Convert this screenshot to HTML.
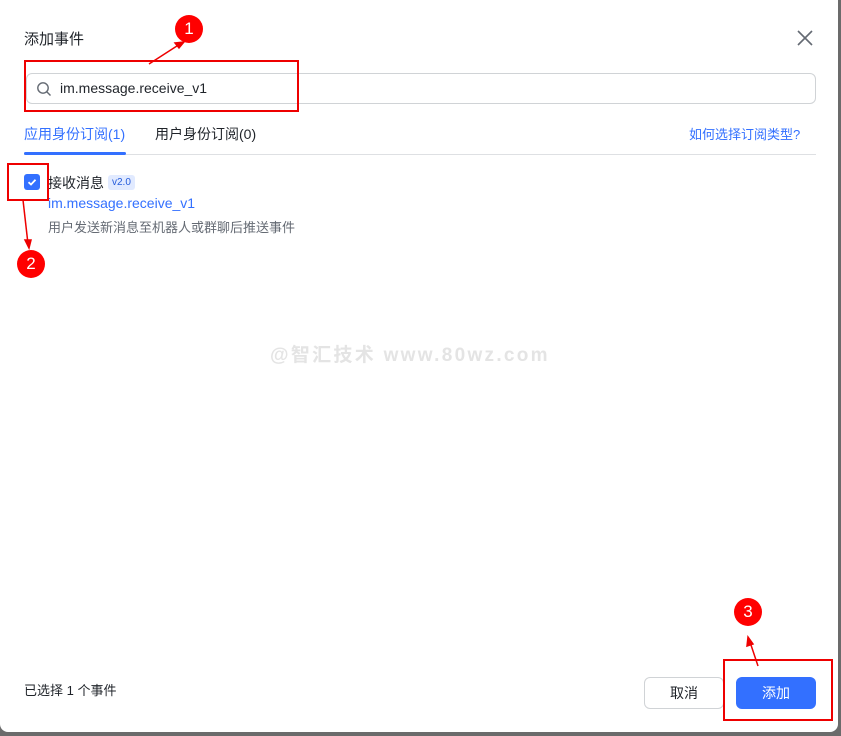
<!DOCTYPE html>
<html><head><meta charset="utf-8"><style>
*{margin:0;padding:0;box-sizing:border-box}
body{width:841px;height:736px;background:#6b6b6b;position:relative;overflow:hidden;font-family:"Liberation Sans","Noto Sans CJK SC",sans-serif;color:#1f2329}
.m{position:absolute;left:0;top:0;width:838px;height:732px;background:#fff;border-radius:0 0 8px 8px}
.a{position:absolute}
.circ{position:absolute;width:28px;height:28px;border-radius:50%;background:#f00;color:#fff;font-size:17px;text-align:center;line-height:28px}
.box{position:absolute;border:2px solid #e00}
</style></head><body>
<div class="m">
<div class="a" style="left:24px;top:28px;font-size:15px">添加事件</div>
<svg class="a" style="left:796px;top:29px" width="18" height="18"><path d="M2 2L16 16M16 2L2 16" stroke="#646a73" stroke-width="1.6"/></svg>
<div class="a" style="left:26px;top:73px;width:790px;height:31px;border:1px solid #d0d3d6;border-radius:6px"></div>
<svg class="a" style="left:36px;top:81px" width="16" height="16"><circle cx="7" cy="7" r="5.2" fill="none" stroke="#646a73" stroke-width="1.4"/><path d="M11 11L14.5 14.5" stroke="#646a73" stroke-width="1.4"/></svg>
<div class="a" style="left:60px;top:80px;font-size:14px">im.message.receive_v1</div>
<div class="a" style="left:24px;top:124px;font-size:14px;color:#3370ff">应用身份订阅(1)</div>
<div class="a" style="left:155px;top:124px;font-size:14px">用户身份订阅(0)</div>
<div class="a" style="left:689px;top:124px;font-size:13px;color:#3370ff">如何选择订阅类型?</div>
<div class="a" style="left:24px;top:154px;width:792px;height:1px;background:#dee0e3"></div>
<div class="a" style="left:24px;top:152px;width:102px;height:3px;background:#3370ff;border-radius:2px"></div>
<div class="a" style="left:24px;top:174px;width:16px;height:16px;background:#3370ff;border-radius:3px"></div>
<svg class="a" style="left:24px;top:174px" width="16" height="16"><path d="M4.5 8.2L7 10.5L11.5 5.8" stroke="#fff" stroke-width="1.8" fill="none"/></svg>
<div class="a" style="left:48px;top:173px;font-size:14px">接收消息</div>
<div class="a" style="left:108px;top:175px;font-size:10px;background:#e1eaff;color:#245bdb;padding:2px 4px;border-radius:3px">v2.0</div>
<div class="a" style="left:48px;top:195px;font-size:14px;color:#3370ff">im.message.receive_v1</div>
<div class="a" style="left:48px;top:217px;font-size:13px;color:#646a73">用户发送新消息至机器人或群聊后推送事件</div>
<div class="a" style="left:270px;top:340px;font-size:19px;font-weight:bold;color:#e4e4e4;letter-spacing:2.3px">@智汇技术 www.80wz.com</div>
<div class="a" style="left:24px;top:680px;font-size:13px">已选择 1 个事件</div>
<div class="a" style="left:644px;top:677px;width:80px;height:32px;border:1px solid #d0d3d6;border-radius:6px;text-align:center;line-height:30px;font-size:14px">取消</div>
<div class="a" style="left:736px;top:677px;width:80px;height:32px;background:#3370ff;border-radius:6px;text-align:center;line-height:32px;font-size:14px;color:#fff">添加</div>
</div>
<div class="box" style="left:24px;top:60px;width:275px;height:52px"></div>
<div class="box" style="left:7px;top:163px;width:42px;height:38px"></div>
<div class="box" style="left:723px;top:659px;width:110px;height:62px"></div>
<svg class="a" style="left:0;top:0" width="841" height="736"><g stroke="#e00" stroke-width="1.5" fill="#e00"><path d="M149 64L180 44"/><path d="M184 42L175 43L179 48Z"/><path d="M23 200L28 244"/><path d="M29 248L25 240L31 240Z"/><path d="M758 666L750 642"/><path d="M748 637L747 646L753 644Z"/></g></svg>
<div class="circ" style="left:175px;top:15px">1</div>
<div class="circ" style="left:17px;top:250px">2</div>
<div class="circ" style="left:734px;top:598px">3</div>
</body></html>
